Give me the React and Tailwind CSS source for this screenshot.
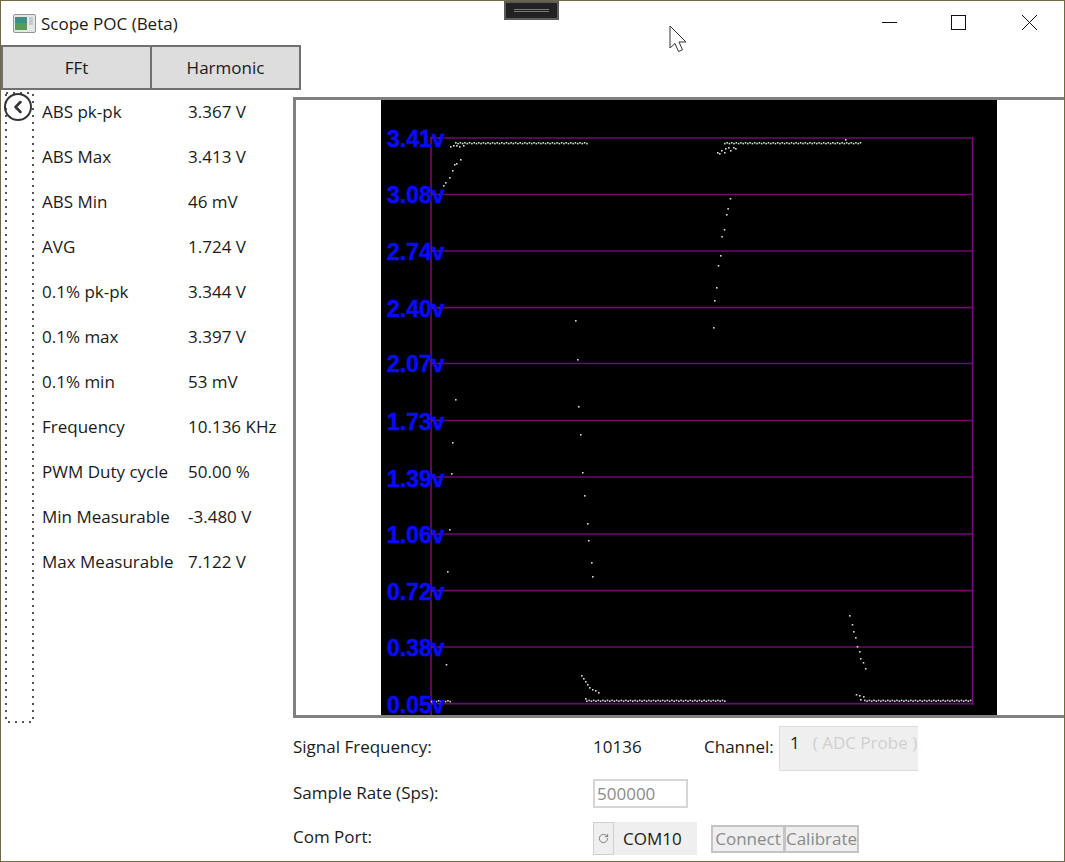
import { ChevronLeft, RotateCw } from 'lucide-react';

const stats = [
  ['ABS pk-pk', '3.367 V'],
  ['ABS Max', '3.413 V'],
  ['ABS Min', '46 mV'],
  ['AVG', '1.724 V'],
  ['0.1% pk-pk', '3.344 V'],
  ['0.1% max', '3.397 V'],
  ['0.1% min', '53 mV'],
  ['Frequency', '10.136 KHz'],
  ['PWM Duty cycle', '50.00 %'],
  ['Min Measurable', '-3.480 V'],
  ['Max Measurable', '7.122 V'],
];

// chart coords are relative to the black area, which starts at x=381 y=100
const levels = [
  ['3.41v', 138, 147], ['3.08v', 194.5, 203], ['2.74v', 251, 260], ['2.40v', 307.6, 317],
  ['2.07v', 363.5, 372], ['1.73v', 420.5, 430], ['1.39v', 477, 487], ['1.06v', 534, 543],
  ['0.72v', 590.7, 600], ['0.38v', 647, 656], ['0.05v', 703.7, 713],
];

const scatter = [
  [443, 185], [445, 182], [449, 177], [452, 170], [454, 164], [456, 163], [460, 159],
  [450, 146], [453, 145], [456, 145], [459, 146], [463, 145],
  [455, 399], [452, 442], [451, 473], [449, 529], [447, 571], [445.7, 664],
  [575, 320], [577, 359], [578, 406], [580, 434], [582, 472], [584, 495], [587, 523], [588, 540], [591, 562], [592, 576],
  [713, 327], [714, 300], [716, 287], [717.7, 265], [720, 255], [721.3, 236], [723.7, 229], [726, 214], [727.3, 208], [729.7, 198],
  [717, 152], [719, 153], [721, 150], [724, 152], [725, 148], [728, 147], [730, 150], [733, 147], [735, 148],
  [581, 675], [583, 678], [585, 681], [587, 684], [589, 687], [592, 689], [595, 690], [598, 692], [585, 698],
  [849, 615], [851.7, 624], [853, 631], [855, 637], [856.7, 646], [859, 651], [860, 658], [862.7, 662], [865, 668],
  [855.7, 694], [859, 695], [863, 696], [860, 699], [845, 139],
];

function plateau(from, to, y) {
  const pts = [];
  for (let x = from; x < to; x += 2.3) {
    pts.push([x, y + (Math.round(x / 2.3) % 2 === 0 ? 0 : 0.8)]);
  }
  return pts;
}

const dots = [
  ...scatter,
  ...plateau(455, 588, 142),
  ...plateau(724, 860, 142),
  ...plateau(586, 724, 699.6),
  ...plateau(864, 972, 699.6),
  ...plateau(431, 450, 700),
];

function Chart() {
  return (
    <svg width="616" height="615" viewBox="381 100 616 615" className="block bg-black shrink-0">
      {levels.map(([, y]) => (
        <line key={y} x1="431" x2="973" y1={y} y2={y} stroke="#6e0a6e" strokeWidth="1.7" />
      ))}
      <line x1="431" x2="431" y1="137" y2="715" stroke="#6e0a6e" strokeWidth="1.7" />
      <line x1="972.6" x2="972.6" y1="137" y2="705" stroke="#7a0a7a" strokeWidth="1.7" />
      {dots.map(([x, y], i) => (
        <rect key={i} x={x} y={y} width="1.6" height="1.6" fill="#d8d8d8" />
      ))}
      {levels.map(([label, , base]) => (
        <text
          key={label}
          x="387"
          y={base}
          fill="#0a0aff"
          stroke="#0a0aff"
          strokeWidth="0.5"
          fontSize="23"
          fontWeight="700"
          fontFamily="'Liberation Sans', Arial, sans-serif"
        >
          {label}
        </text>
      ))}
    </svg>
  );
}

export default function App() {
  return (
    <div className="relative w-[1065px] h-[862px] box-border border border-[#72683f] bg-white overflow-hidden font-['Open_Sans',sans-serif] text-[17px] text-[#1a1a1a]">
      {/* title bar */}
      <div className="h-[44px] flex items-center pl-3 pt-[1px]">
        <svg width="23" height="19" viewBox="0 0 23 19" className="shrink-0 -mt-[1px]">
          <rect x="0.5" y="0.5" width="22" height="18" rx="1.5" fill="#e6e8e8" stroke="#8f9598" />
          <rect x="2" y="3" width="12" height="13" fill="#3c8f86" />
          <rect x="2" y="9" width="12" height="7" fill="#5a9a55" />
          <rect x="16" y="3" width="4" height="8" fill="#c6cacb" />
        </svg>
        <span className="ml-[5px]">Scope POC (Beta)</span>
      </div>

      {/* tabs */}
      <div className="flex h-[45px] w-[300px]">
        <div className="flex-1 flex items-center justify-center pt-[1px] bg-[#dddddd] border-2 border-[#707070]">FFt</div>
        <div className="flex-1 flex items-center justify-center pt-[1px] bg-[#dddddd] border-2 border-l-0 border-[#707070]">Harmonic</div>
      </div>

      <div className="flex">
        {/* left stats */}
        <div className="w-[292px] shrink-0 flex pl-[3px] pt-[2px]">
          <div className="relative w-[30px] h-[631px] shrink-0 pt-[1px]">
            <svg className="absolute inset-0" width="30" height="631" fill="none">
              <rect x="2" y="1" width="27" height="629" stroke="#555" strokeWidth="2" strokeDasharray="2 5" />
            </svg>
            <div className="relative w-[28px] h-[28px] rounded-full border-2 border-[#333] flex items-center justify-center">
              <ChevronLeft size={20} strokeWidth={3} className="text-[#333] -ml-[1px]" />
            </div>
          </div>
          <div className="ml-[8px] -mt-[3px]">
            {stats.map(([label, value]) => (
              <div key={label} className="h-[45px] flex items-center whitespace-nowrap">
                <span className="w-[146px]">{label}</span>
                <span>{value}</span>
              </div>
            ))}
          </div>
        </div>

        {/* chart and form */}
        <div className="flex-1 min-w-0">
          <div className="mt-[7px] h-[621px] flex items-start pl-[85px] border-l-3 border-y-3 border-[#808080]">
            <Chart />
          </div>

          <div className="grid grid-cols-[300px_1fr] grid-rows-[45px_45px_45px] mt-[8px] items-center">
            <span className="-mt-[4px]">Signal Frequency:</span>
            <div className="flex items-center">
              <span className="w-[111px] -mt-[4px]">10136</span>
              <span className="w-[75px] -mt-[4px]">Channel:</span>
              <div className="w-[139px] h-[45px] mt-[-1px] bg-[#efefef] border border-r-0 border-[#dcdcdc] pl-[10px] pt-[3px] flex items-start overflow-hidden whitespace-nowrap">
                <span>1</span>
                <span className="ml-[13px] text-[#cfcfcf] font-medium">( ADC Probe )</span>
              </div>
            </div>

            <span className="-mt-[2px]">Sample Rate (Sps):</span>
            <input
              readOnly
              value="500000"
              className="w-[95px] h-[29px] border-2 border-[#d6d6d6] px-[2px] text-[#8a8a8a] outline-none"
            />

            <span className="-mt-[4px]">Com Port:</span>
            <div className="flex items-center">
              <div className="w-[21px] h-[33px] bg-[#efefef] border border-[#cfcfcf] flex items-center justify-center">
                <RotateCw size={11} className="text-[#777]" />
              </div>
              <div className="w-[83px] h-[33px] bg-[#efefef] pl-[9px] flex items-center">COM10</div>
              <div className="ml-[14px] w-[74px] h-[28px] bg-[#eeeeee] border-2 border-[#c4c4c4] flex items-center justify-center text-[#8a8a8a]">Connect</div>
              <div className="w-[75px] h-[28px] -ml-[1px] bg-[#eeeeee] border-2 border-[#c4c4c4] flex items-center justify-center text-[#8a8a8a]">Calibrate</div>
            </div>
          </div>
        </div>
      </div>

      {/* window grip */}
      <div className="absolute top-0 left-[503px] w-[55px] h-[19px] bg-[#222] border-2 border-[#5c5c5c] flex flex-col justify-center gap-[1px] px-[8px]">
        <div className="h-[1px] bg-[#777]" />
        <div className="h-[1px] bg-[#777]" />
      </div>

      {/* window controls */}
      <svg className="absolute top-[13px] left-[880px]" width="160" height="20" viewBox="0 0 160 20" fill="none" stroke="#111" strokeWidth="1">
        <path d="M1 8.5h15" />
        <rect x="70.5" y="1.5" width="14" height="14" />
        <path d="M141 1l15 15M156 1l-15 15" />
      </svg>

      {/* mouse pointer */}
      <svg className="absolute top-[24px] left-[668px]" width="20" height="28" viewBox="0 0 20 28">
        <path d="M1 1v22l5-4.5 3.5 8 4-1.7-3.5-7.8h7z" fill="#fff" stroke="#333" strokeWidth="1" strokeLinejoin="miter" />
      </svg>
    </div>
  );
}
